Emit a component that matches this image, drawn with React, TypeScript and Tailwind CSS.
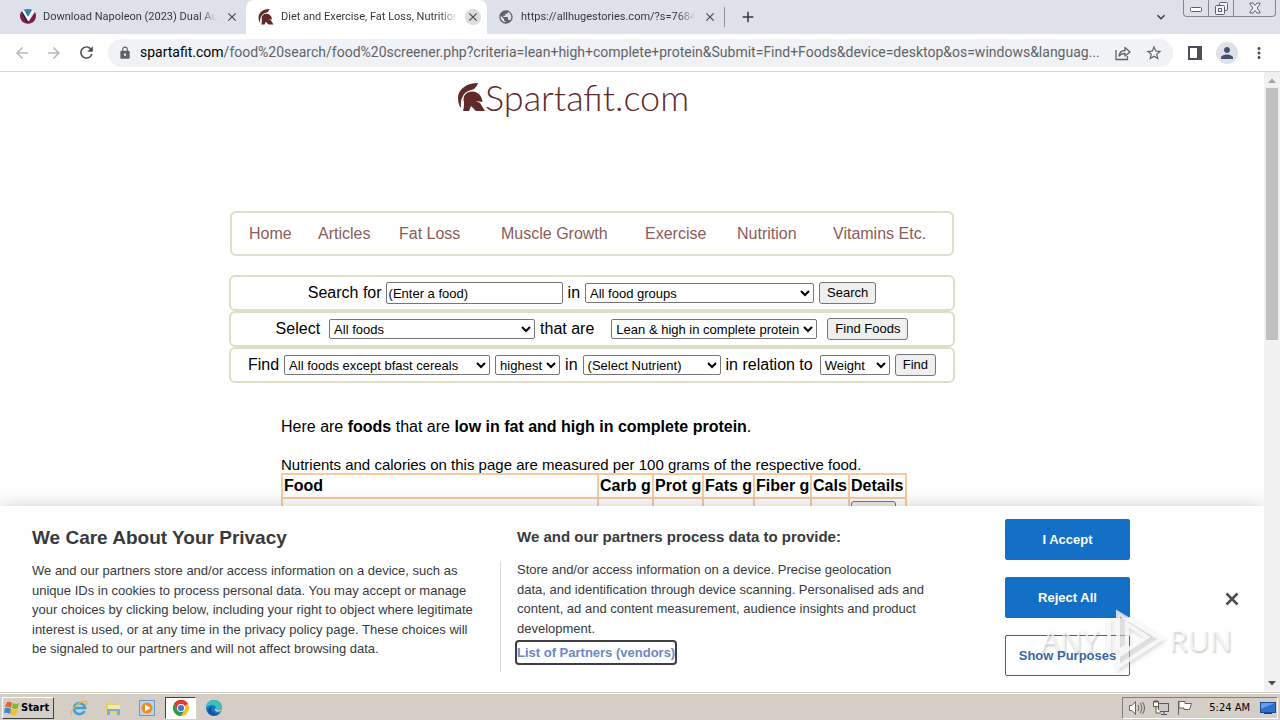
import type { ReactNode } from 'react';
import { MdArrowBack, MdArrowForward, MdRefresh, MdLock, MdStarBorder, MdMoreVert, MdPerson, MdPublic, MdAdd, MdClose, MdKeyboardArrowDown } from 'react-icons/md';

const maroon = '#5e2a2a';

function Helmet({ className }: { className: string }) {
  return (
    <svg viewBox="0 0 27 29" className={className} fill={maroon} aria-hidden="true">
      <path d="M20 0 C9 0 0 6 0 15 C0 19 1 23 3 25 C2.500 20 3 16 5 13 C7 9 10 7.500 15 6.500 C17 5.500 19 3 20 0 Z" />
      <path d="M14 8.500 C9 8.500 5.500 12 5.500 17 C6.500 20 6 24 5 28 L11 28 L13 23 L18 28 L27 28 L22 20 L18 18 L24.500 19 C24 13 20 8.500 14 8.500 Z" />
    </svg>
  );
}

function VLogo() {
  return (
    <svg viewBox="0 0 16 16" className="size-4" aria-hidden="true">
      <path d="M1 3 A8 8 0 1 0 15 3 L9 12 L7 12 Z" fill="#7d1f4d" />
      <path d="M1 3 L7 14 L8 11 L3 2 Z" fill="#2a2238" />
      <path d="M3 1 Q8 -1 13 1 L8 9 Z" fill="#2e86b0" />
      <path d="M2 2 L8 12 L14 2 L12 1 L8 8 L4 1 Z" fill="#fff" />
    </svg>
  );
}

function ShareIcon() {
  return (
    <svg viewBox="0 0 16 16" className="size-4" fill="none" stroke="#5f6368" strokeWidth="1.3" aria-hidden="true">
      <path d="M1 5 V14.5 H12.5 V11" />
      <path d="M4 11 C4.500 7 7 5.500 10 5.500 V2.500 L15 7 L10 11 V8.500 C7.500 8.500 5.500 9 4 11 Z" strokeLinejoin="round" />
    </svg>
  );
}

function ChromeIcon() {
  return (
    <svg viewBox="0 0 16 16" className="size-4" aria-hidden="true">
      <circle cx="8" cy="8" r="8" fill="#fbc116" />
      <path d="M8 8 L1.070 4 A8 8 0 0 1 14.930 4 Z" fill="#e33b2e" />
      <path d="M8 4 H14.930 A8 8 0 0 0 1.070 4 L4.540 10 Z" fill="#e33b2e" />
      <path d="M1.070 4 A8 8 0 0 0 8 16 L11.460 10 L8 8 L4.540 10 Z" fill="#2a9d4a" />
      <circle cx="8" cy="8" r="4" fill="#fff" />
      <circle cx="8" cy="8" r="3.100" fill="#3b78e7" />
    </svg>
  );
}

function Tab({ icon, title, active, className }: { icon: ReactNode; title: string; active?: boolean; className: string }) {
  return (
    <div className={`${className} flex h-full shrink-0 items-center gap-[7px] pr-1.5 ${active ? 'rounded-t-lg bg-white' : ''}`}>
      {icon}
      <span className="flex-1 overflow-hidden whitespace-nowrap bg-gradient-to-r from-[#303337] from-90% to-transparent bg-clip-text text-[11px] text-transparent">{title}</span>
      <button aria-label={`Close ${title}`} className={`flex size-4 shrink-0 items-center justify-center rounded-full text-[#45494d] ${active ? 'bg-[#dcdcdc]' : ''}`}>
        <MdClose className="size-3.5" />
      </button>
    </div>
  );
}

function Picker({ label, value, width }: { label: string; value: string; width: string }) {
  return (
    <select aria-label={label} className={`${width} h-5 rounded-[2px] border border-[#767676] bg-white text-[13px] text-black`}>
      <option>{value}</option>
    </select>
  );
}

function PushButton({ children }: { children: ReactNode }) {
  return <button className="h-[22px] rounded-[3px] border border-[#767676] bg-[#efefef] px-[7px] text-[13px]">{children}</button>;
}

function FormRow({ children }: { children: ReactNode }) {
  return <form className="flex h-9 items-center justify-center gap-[5px] rounded-md border-2 border-[#dedfc8]">{children}</form>;
}

const columns = ['Food', 'Carb g', 'Prot g', 'Fats g', 'Fiber g', 'Cals', 'Details'];

function SpartafitPage() {
  return (
    <div className="mx-auto w-[806px] font-['Liberation_Sans',Arial,sans-serif] text-base leading-[18px] text-black">
      <div className="w-[726px]">
        <a href="#home" className="flex h-[139px] items-start pl-[229px] pt-[11px]">
          <Helmet className="h-[29px] w-[27px]" />
          <span className="font-['Lato',sans-serif] text-[36px] font-light leading-7 text-[#5e2a2a]">Spartafit.com</span>
        </a>
        <nav className="mx-px grid h-[45px] grid-cols-[69px_81px_102px_144px_92px_96px_1fr] items-center rounded-md border-2 border-[#dedfc8] pl-[17px] text-[#8a5c5c]">
          <a href="#home">Home</a>
          <a href="#articles">Articles</a>
          <a href="#fat-loss">Fat Loss</a>
          <a href="#muscle">Muscle Growth</a>
          <a href="#exercise">Exercise</a>
          <a href="#nutrition">Nutrition</a>
          <a href="#vitamins">Vitamins Etc.</a>
        </nav>
        <div className="mt-[19px]">
          <FormRow>
            <label className="flex items-center gap-1">
              Search for
              <input defaultValue="(Enter a food)" className="h-[22px] w-[177px] rounded-[2px] border border-[#767676] px-0.5 text-[13px]" />
            </label>
            <span>in</span>
            <Picker label="Food group" value="All food groups" width="w-[229px]" />
            <PushButton>Search</PushButton>
          </FormRow>
          <FormRow>
            <span className="pr-1">Select</span>
            <Picker label="Foods" value="All foods" width="w-[206px]" />
            <span className="pr-3">that are</span>
            <Picker label="Criteria" value="Lean & high in complete protein" width="w-[206px]" />
            <div className="pl-[5px]"><PushButton>Find Foods</PushButton></div>
          </FormRow>
          <FormRow>
            <span>Find</span>
            <Picker label="Foods to rank" value="All foods except bfast cereals" width="w-[206px]" />
            <Picker label="Order" value="highest" width="w-[65px]" />
            <span>in</span>
            <Picker label="Nutrient" value="(Select Nutrient)" width="w-[138px]" />
            <span className="pr-0.5">in relation to</span>
            <Picker label="Relation" value="Weight" width="w-[70px]" />
            <PushButton>Find</PushButton>
          </FormRow>
        </div>
        <div className="pl-[52px] pt-[35px]">
          <p>Here are <b>foods</b> that are <b>low in fat and high in complete protein</b>.</p>
          <p className="mt-5 text-[15px] leading-[17px]">Nutrients and calories on this page are measured per 100 grams of the respective food.</p>
          <table className="w-[624px] table-fixed border-collapse">
            <colgroup>
              <col className="w-[316px]" />
              <col className="w-[55px]" />
              <col className="w-[50px]" />
              <col className="w-[51px]" />
              <col className="w-[57px]" />
              <col className="w-[38px]" />
              <col className="w-[57px]" />
            </colgroup>
            <thead>
              <tr>
                {columns.map((c) => (
                  <th key={c} className="h-6 whitespace-nowrap border-2 border-[#f6cba0] px-px py-0 text-left">{c}</th>
                ))}
              </tr>
            </thead>
            <tbody>
              <tr>
                {columns.map((c) => (
                  <td key={c} className="h-7 border-2 border-[#f6cba0] px-px">
                    {c === 'Details' && <button aria-label="Food details" className="block h-[22px] w-[45px] rounded-[3px] border border-[#767676] bg-[#efefef]" />}
                  </td>
                ))}
              </tr>
            </tbody>
          </table>
        </div>
      </div>
    </div>
  );
}

function Watermark() {
  return (
    <div className="pointer-events-none absolute bottom-5 right-8 flex items-center gap-1 font-['Open_Sans',sans-serif] text-[30px] leading-none text-white/70 [text-shadow:1px_2px_2px_rgba(120,120,120,0.4)]">
      <span>ANY</span>
      <svg viewBox="0 0 62 64" className="h-16 w-[62px] drop-shadow-[1px_2px_2px_rgba(120,120,120,0.4)]" fill="none" stroke="#fff" strokeOpacity="0.75" strokeWidth="4" aria-hidden="true">
        <path d="M6 10 V46" />
        <path d="M15 5 V44 L24 38 V16 L44 29 L15 48 V59 L58 31 Z" fill="#ddd" fillOpacity="0.4" />
      </svg>
      <span>RUN</span>
    </div>
  );
}

function ConsentBanner() {
  const action = 'h-[41px] w-[125px] rounded-[2px] border border-[#1370c6] text-[13px] font-bold';
  return (
    <section aria-label="Privacy" className="absolute inset-x-0 bottom-0 flex h-[186px] bg-white pl-8 font-['Liberation_Sans',Arial,sans-serif] text-[#373a3d] shadow-[0_0_18px_rgba(0,0,0,0.2)]">
      <div className="w-[468px] pt-5">
        <h2 className="text-[19px] font-bold leading-6">We Care About Your Privacy</h2>
        <p className="mt-[11px] text-[13px] leading-normal">
          We and our partners store and/or access information on a device, such as<br />
          unique IDs in cookies to process personal data. You may accept or manage<br />
          your choices by clicking below, including your right to object where legitimate<br />
          interest is used, or at any time in the privacy policy page. These choices will<br />
          be signaled to our partners and will not affect browsing data.
        </p>
      </div>
      <div className="mt-[55px] h-[111px] w-px bg-[#d8d8d8]" />
      <div className="w-[504px] pl-4 pt-[21px]">
        <h3 className="text-[15px] font-bold leading-5">We and our partners process data to provide:</h3>
        <p className="mt-[13px] text-[13px] leading-normal">
          Store and/or access information on a device. Precise geolocation<br />
          data, and identification through device scanning. Personalised ads and<br />
          content, ad and content measurement, audience insights and product<br />
          development.
        </p>
        <button className="mt-1 h-[21px] rounded-[2px] text-[13px] font-bold text-[#6c87c4] outline-2 outline-[#3c3f44]">List of Partners (vendors)</button>
      </div>
      <div className="flex flex-col gap-[17px] pt-[13px]">
        <button className={`${action} bg-[#1370c6] text-white`}>I Accept</button>
        <button className={`${action} bg-[#1370c6] text-white`}>Reject All</button>
        <button className={`${action} bg-white text-[#3568a6]`}>Show Purposes</button>
      </div>
      <button aria-label="Close" className="ml-auto mr-[25px] self-center">
        <svg viewBox="0 0 14 14" className="size-3.5" stroke="#4b4d50" strokeWidth="2.500" aria-hidden="true"><path d="M1.500 1.500 L12.500 12.500 M12.500 1.500 L1.500 12.500" /></svg>
      </button>
      <Watermark />
    </section>
  );
}

function BrowserChrome() {
  return (
    <header className="shrink-0 font-['Roboto',sans-serif]">
      <div className="flex h-[34px] items-start bg-[#dee1e9]">
        <div className="flex h-full items-center pl-1.5">
          <Tab className="w-[240px] pl-[14px]" title="Download Napoleon (2023) Dual Aud" icon={<VLogo />} />
          <Tab active className="w-[241px] pl-3" title="Diet and Exercise, Fat Loss, Nutrition" icon={<Helmet className="h-4 w-4" />} />
          <Tab className="w-[237px] pl-[11px]" title="https://allhugestories.com/?s=76845" icon={<MdPublic className="size-4 text-[#5f6368]" />} />
          <div className="h-5 w-px bg-[#8c9096]" />
          <button aria-label="New tab" className="ml-3.5"><MdAdd className="size-[18px] text-[#35383b]" /></button>
        </div>
        <button aria-label="Search tabs" className="ml-auto mr-3.5 h-full"><MdKeyboardArrowDown className="size-4 text-[#35383b]" /></button>
        <div className="mr-1 flex h-[17px] divide-x divide-[#85898f] rounded-b-[4px] border border-t-0 border-[#85898f] text-[#5d6066]">
          <button aria-label="Minimize" className="flex w-[25px] items-center justify-center">
            <svg viewBox="0 0 12 12" className="size-3" fill="#fff" stroke="currentColor" aria-hidden="true"><rect x="0.500" y="5.500" width="11" height="4" rx="1" /></svg>
          </button>
          <button aria-label="Restore" className="flex w-[25px] items-center justify-center">
            <svg viewBox="0 0 13 13" className="size-[13px]" fill="#f3f4f7" stroke="currentColor" aria-hidden="true"><rect x="4.500" y="0.500" width="8" height="8" rx="1" /><rect x="0.500" y="3.500" width="9" height="9" rx="1" /><rect x="3.500" y="6.500" width="3" height="3" /></svg>
          </button>
          <button aria-label="Close window" className="flex w-[41px] items-center justify-center">
            <svg viewBox="0 0 12 12" className="size-3" fill="#f3f4f7" stroke="currentColor" aria-hidden="true"><path d="M1 1 H4 L6 3.500 L8 1 H11 V2 L8 6 L11 10 V11 H8 L6 8.500 L4 11 H1 V10 L4 6 L1 2 Z" /></svg>
          </button>
        </div>
      </div>
      <div className="flex h-[38px] items-center border-b border-[#d3d5d8] bg-white pl-[13px] pr-3 text-[#5f6368]">
        <button aria-label="Back"><MdArrowBack className="size-[18px] text-[#b4b6b9]" /></button>
        <button aria-label="Forward" className="ml-3.5"><MdArrowForward className="size-[18px] text-[#b4b6b9]" /></button>
        <button aria-label="Reload" className="ml-3.5"><MdRefresh className="size-[19px] text-[#4c5054]" /></button>
        <div className="ml-3 flex h-7 min-w-0 flex-1 items-center rounded-full bg-[#f0f2f5] pl-2.5 pr-2.5">
          <MdLock className="size-3.5 shrink-0 text-[#5f6368]" />
          <div className="ml-2 min-w-0 flex-1 truncate text-[14px] text-[#5f6368]">
            <span className="text-black">spartafit.com</span>/food%20search/food%20screener.php?criteria=lean+high+complete+protein&amp;Submit=Find+Foods&amp;device=desktop&amp;os=windows&amp;languag...
          </div>
          <button aria-label="Share" className="ml-3.5"><ShareIcon /></button>
          <button aria-label="Bookmark" className="ml-3.5"><MdStarBorder className="size-[18px]" /></button>
        </div>
        <button aria-label="Side panel" className="ml-[15px]">
          <svg viewBox="0 0 14 14" className="size-3.5" fill="#4c5054" aria-hidden="true"><path d="M0 0 H14 V14 H0 Z M2 2 V12 H9 V2 Z" fillRule="evenodd" /></svg>
        </button>
        <button aria-label="Profile" className="ml-3.5 flex size-[22px] items-center justify-center rounded-full bg-[#dee1e9]"><MdPerson className="size-[18px] text-[#47506e]" /></button>
        <button aria-label="Menu" className="ml-3"><MdMoreVert className="size-[18px] text-[#4c5054]" /></button>
      </div>
    </header>
  );
}

function Scrollbar() {
  return (
    <div className="flex w-4 shrink-0 flex-col items-center bg-[#f1f1f1]">
      <svg viewBox="0 0 16 16" className="size-4 shrink-0" fill="#a3a3a3" aria-hidden="true"><path d="M4 11 L8 6.500 L12 11 Z" /></svg>
      <div className="h-[252px] w-3 bg-[#c1c1c1]" />
      <svg viewBox="0 0 16 16" className="mt-auto size-4 shrink-0" fill="#505050" aria-hidden="true"><path d="M4 5 L8 9.500 L12 5 Z" /></svg>
    </div>
  );
}

function Taskbar() {
  return (
    <footer className="flex h-7 shrink-0 items-center border-t border-[#d4d0c8] bg-[#d5cec7] pr-0.5 font-['DejaVu_Sans_Condensed','DejaVu_Sans',sans-serif] shadow-[inset_0_1px_0_#fff]">
      <button className="ml-0.5 mt-0.5 flex h-[22px] w-[52px] items-center gap-px border border-b-[#404040] border-l-white border-r-[#404040] border-t-white pl-px text-[11px] font-bold leading-none text-black">
        <svg viewBox="0 0 16 16" className="size-4 shrink-0" aria-hidden="true">
          <path d="M3 2 Q6 1 8 3 L7 8 Q4 6 1 7 Z" fill="#e5672d" />
          <path d="M9 3 Q12 5 15 3 L14 8 Q11 10 8 8 Z" fill="#83b735" />
          <path d="M1 8 Q4 7 7 9 L6 14 Q3 12 0 13 Z" fill="#3f8bd2" />
          <path d="M8 9 Q11 11 14 9 L13 14 Q9 16 6 14 Z" fill="#f4bd2b" />
        </svg>
        Start
      </button>
      <div className="ml-4 mt-0.5 flex items-center">
        <button aria-label="Internet Explorer">
          <svg viewBox="0 0 18 18" className="size-[18px]" fill="none" aria-hidden="true">
            <path d="M14.500 12 A5.500 5.500 0 1 1 15 9 H5" stroke="#3aa0de" strokeWidth="2.600" />
            <path d="M2 16 C-1 13 8 2 16 2 C18 3 16 5 15 6" stroke="#e5b93a" strokeWidth="1.300" />
          </svg>
        </button>
        <button aria-label="File Explorer" className="ml-4">
          <svg viewBox="0 0 18 18" className="size-[18px]" aria-hidden="true">
            <path d="M2 4 L7 2 L9 4 H15 V14 H2 Z" fill="#e9cf72" />
            <path d="M4 6 H16 V12 H4 Z" fill="#f7e9ad" />
            <path d="M3 10 H16 V16 H13 V12 H6 V16 H3 Z" fill="#74b3d8" />
          </svg>
        </button>
        <button aria-label="Media Player" className="ml-4">
          <svg viewBox="0 0 18 18" className="size-[18px]" aria-hidden="true">
            <rect x="1.500" y="1.500" width="15" height="15" fill="#b9d3ea" stroke="#6f9cc6" />
            <circle cx="9" cy="9" r="5.500" fill="#f08a1d" />
            <path d="M7 5.500 L12.500 9 L7 12.500 Z" fill="#fff" />
          </svg>
        </button>
        <button aria-label="Chrome" className="ml-[9px] flex h-[22px] w-[31px] items-center justify-center border border-b-white border-l-[#404040] border-r-white border-t-[#404040] bg-white"><ChromeIcon /></button>
        <button aria-label="Edge" className="ml-[10px]">
          <svg viewBox="0 0 16 16" className="size-4" aria-hidden="true">
            <circle cx="8" cy="8" r="8" fill="#1677c8" />
            <path d="M0 8 A8 8 0 0 1 16 8 C16 11 12 12 10 10 C11 8 9 5 6 5 C3 5 1 7 0 8 Z" fill="#3fc0b6" />
            <path d="M6 7 C4 10 7 15 13 13 C10 17 3 16 2 11 C2 8 4 7 6 7 Z" fill="#15539e" />
            <path d="M9 8 C8 11 11 13 15 11 L16 9 C14 11 11 11 9 8 Z" fill="#d5cec7" />
          </svg>
        </button>
      </div>
      <div className="ml-auto mt-0.5 flex h-[22px] items-center gap-2 border border-b-white border-l-[#808080] border-r-white border-t-[#808080] pl-1.5 pr-px text-[11px] leading-none text-black">
        <svg viewBox="0 0 16 16" className="size-4" fill="#fff" stroke="#66635f" aria-hidden="true"><path d="M0.500 5.500 H3 L6.500 1.500 V14.500 L3 10.500 H0.500 Z" /><path d="M9 5 Q11 8 9 11 M11.500 3 Q14.500 8 11.500 13 M13.500 2 Q17.500 8 13.500 14" fill="none" /></svg>
        <svg viewBox="0 0 16 16" className="size-4" fill="#fff" stroke="#5a5753" aria-hidden="true"><rect x="5.500" y="3.500" width="10" height="8" fill="#c8c8c8" /><path d="M8 14.500 H14 M11 12 V14" /><path d="M0.500 1.500 H5.500 V6.500 H0.500 Z M2 0 V3 M4 0 V3 M3 7 V13 H8" /></svg>
        <svg viewBox="0 0 16 16" className="size-4" fill="#fff" stroke="#66635f" aria-hidden="true"><path d="M1.500 1 V15 M2 1.500 H8 V3.500 H14.500 L12.500 9.500 H7 V8 H2 Z" /></svg>
        <time className="ml-2 whitespace-nowrap">5:24 AM</time>
        <svg viewBox="0 0 16 14" className="ml-0.5 h-3.5 w-4" aria-hidden="true"><rect x="0.500" y="1.500" width="15" height="10" fill="#2d72d0" stroke="#174a94" /><path d="M1 2 H15 L1 8 Z" fill="#5fa0ea" /><rect x="4" y="12" width="8" height="1" fill="#1b3f74" /></svg>
      </div>
    </footer>
  );
}

export default function App() {
  return (
    <div className="flex h-screen flex-col overflow-hidden bg-white">
      <BrowserChrome />
      <div className="flex min-h-0 flex-1">
        <main className="relative min-w-0 flex-1 overflow-hidden">
          <SpartafitPage />
          <ConsentBanner />
        </main>
        <Scrollbar />
      </div>
      <Taskbar />
    </div>
  );
}
